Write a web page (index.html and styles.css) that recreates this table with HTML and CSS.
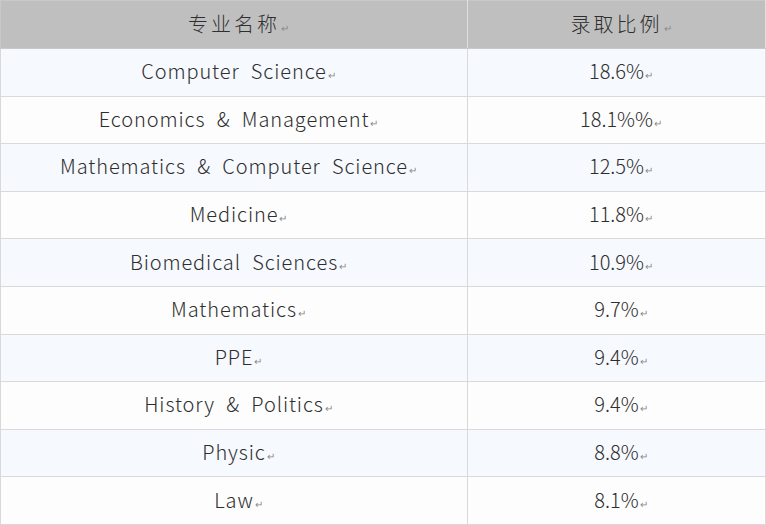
FILE: index.html
```html
<!DOCTYPE html>
<html lang="zh">
<head>
<meta charset="utf-8">
<link rel="stylesheet" href="styles.css">
</head>
<body>
<table class="tbl">
  <thead>
    <tr><th class="c1">专业名称<span class="ret">↵</span></th><th class="c2">录取比例<span class="ret">↵</span></th></tr>
  </thead>
  <tbody>
    <tr class="alt"><td>Computer Science<span class="ret">↵</span></td><td class="num">18.6%<span class="ret">↵</span></td></tr>
    <tr><td>Economics &amp; Management<span class="ret">↵</span></td><td class="num">18.1%%<span class="ret">↵</span></td></tr>
    <tr class="alt"><td>Mathematics &amp; Computer Science<span class="ret">↵</span></td><td class="num">12.5%<span class="ret">↵</span></td></tr>
    <tr><td>Medicine<span class="ret">↵</span></td><td class="num">11.8%<span class="ret">↵</span></td></tr>
    <tr class="alt"><td>Biomedical Sciences<span class="ret">↵</span></td><td class="num">10.9%<span class="ret">↵</span></td></tr>
    <tr><td>Mathematics<span class="ret">↵</span></td><td class="num">9.7%<span class="ret">↵</span></td></tr>
    <tr class="alt"><td>PPE<span class="ret">↵</span></td><td class="num">9.4%<span class="ret">↵</span></td></tr>
    <tr><td>History &amp; Politics<span class="ret">↵</span></td><td class="num">9.4%<span class="ret">↵</span></td></tr>
    <tr class="alt"><td>Physic<span class="ret">↵</span></td><td class="num">8.8%<span class="ret">↵</span></td></tr>
    <tr><td>Law<span class="ret">↵</span></td><td class="num">8.1%<span class="ret">↵</span></td></tr>
  </tbody>
</table>
</body>
</html>
```
FILE: styles.css
```css
html, body {
  margin: 0;
  padding: 0;
  background: #ffffff;
}
.tbl {
  width: 766px;
  height: 525px;
  border-collapse: collapse;
  table-layout: fixed;
  font-family: "Noto Sans CJK SC", "Noto Sans", sans-serif;
  font-size: 20px;
  font-weight: 300;
  color: #2e2e2e;
}
.tbl th, .tbl td {
  border: 1px solid #d9d9d9;
  text-align: center;
  vertical-align: middle;
  padding: 0 0 3px 9px;
  font-weight: 300;
  letter-spacing: 0.9px;
  word-spacing: 6px;
}
.tbl th {
  background: #bfbfbf;
  border-color: #c9c9c9 #e0e0e0 #c9c9c9 #c9c9c9;
  height: 44px;
  letter-spacing: 3px;
}
.c1 { width: 457px; }
.tbl td { background: #fdfdfd; height: 43px; }
.tbl td.num { letter-spacing: 0; }
.tbl tr.alt td { background: #f6f9fe; }
.ret {
  font-size: 10px;
  color: #8a8a8a;
  letter-spacing: 0;
  margin-left: 1px;
}
```
